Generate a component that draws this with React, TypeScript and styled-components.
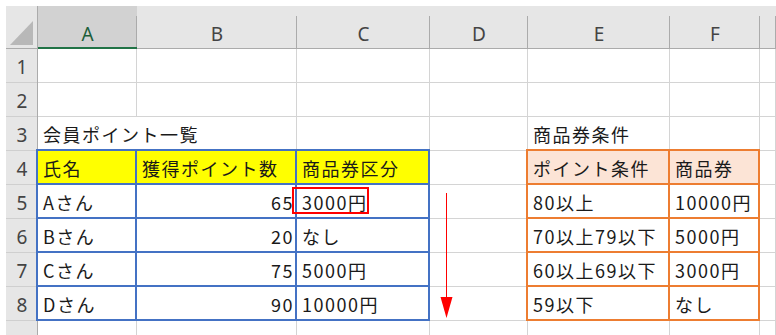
import React from 'react';
import styled, { createGlobalStyle, css } from 'styled-components';

const GlobalStyle = createGlobalStyle`
  html, body { margin: 0; padding: 0; background: #fff; }
  body { font-family: "Noto Sans CJK JP", "Noto Sans", sans-serif; }
`;

const BORDER_COLORS = { blue: '#4472C4', orange: '#ED7D31' } as const;
type BorderKind = keyof typeof BORDER_COLORS;

type CellDef = {
  text?: string;
  align?: 'left' | 'right';
  fill?: string;
  border?: BorderKind;
  span?: number;
  mark?: boolean;
};

const YELLOW = '#FFFF00';
const PEACH = '#FCE4D6';

const COLUMNS = ['A', 'B', 'C', 'D', 'E', 'F', ''];

const E: CellDef = {};

const ROWS: CellDef[][] = [
  [E, E, E, E, E, E, E],
  [E, E, E, E, E, E, E],
  [{ text: '会員ポイント一覧', span: 2 }, E, E, { text: '商品券条件' }, E, E],
  [
    { text: '氏名', fill: YELLOW, border: 'blue' },
    { text: '獲得ポイント数', fill: YELLOW, border: 'blue' },
    { text: '商品券区分', fill: YELLOW, border: 'blue' },
    E,
    { text: 'ポイント条件', fill: PEACH, border: 'orange' },
    { text: '商品券', fill: PEACH, border: 'orange' },
    E,
  ],
  [
    { text: 'Aさん', border: 'blue' },
    { text: '65', align: 'right', border: 'blue' },
    { text: '3000円', border: 'blue', mark: true },
    E,
    { text: '80以上', border: 'orange' },
    { text: '10000円', border: 'orange' },
    E,
  ],
  [
    { text: 'Bさん', border: 'blue' },
    { text: '20', align: 'right', border: 'blue' },
    { text: 'なし', border: 'blue' },
    E,
    { text: '70以上79以下', border: 'orange' },
    { text: '5000円', border: 'orange' },
    E,
  ],
  [
    { text: 'Cさん', border: 'blue' },
    { text: '75', align: 'right', border: 'blue' },
    { text: '5000円', border: 'blue' },
    E,
    { text: '60以上69以下', border: 'orange' },
    { text: '3000円', border: 'orange' },
    E,
  ],
  [
    { text: 'Dさん', border: 'blue' },
    { text: '90', align: 'right', border: 'blue' },
    { text: '10000円', border: 'blue' },
    E,
    { text: '59以下', border: 'orange' },
    { text: 'なし', border: 'orange' },
    E,
  ],
  [E, E, E, E, E, E, E],
];

// Row 9 is only partly on screen; its number lies below the visible edge.
const VISIBLE_ROW_LABELS = 8;

const Sheet = styled.div`
  position: relative;
  width: 776px;
  height: 335px;
  box-sizing: border-box;
  padding: 6px 0 0 6px;
  overflow: hidden;
  background: #fff;
`;

const Grid = styled.div`
  display: grid;
  grid-template-columns: 32px 99px 160px 133px 98px 142px 90px 1fr;
  grid-template-rows: 43px repeat(9, 34px);
`;

const Corner = styled.div`
  background:
    linear-gradient(#ababab, #ababab) right bottom / 1px 100% no-repeat,
    linear-gradient(#ababab, #ababab) left bottom / 100% 1px no-repeat,
    #e6e6e6;
  display: flex;
  align-items: flex-end;
  justify-content: flex-end;
  padding: 0 4px 4px 0;
  box-sizing: border-box;
`;

const ColHeader = styled.div<{ $selected?: boolean }>`
  display: flex;
  align-items: flex-end;
  justify-content: center;
  padding-bottom: 5px;
  box-sizing: border-box;
  font-family: "Noto Sans", "Noto Sans CJK JP", sans-serif;
  font-size: 19px;
  line-height: 1;
  color: #444;
  background:
    linear-gradient(#ababab, #ababab) right bottom / 1px 33px no-repeat,
    linear-gradient(#ababab, #ababab) left bottom / 100% 1px no-repeat,
    #e6e6e6;
  ${(p) =>
    p.$selected &&
    css`
      color: #1d5e3a;
      background:
        linear-gradient(#217346, #217346) left bottom / 100% 2px no-repeat,
        linear-gradient(#ababab, #ababab) right bottom / 1px 33px no-repeat,
        #d2d2d2;
    `}
`;

const RowHeader = styled.div`
  display: flex;
  align-items: center;
  justify-content: center;
  padding-top: 3px;
  box-sizing: border-box;
  font-family: "Noto Sans", "Noto Sans CJK JP", sans-serif;
  font-size: 19px;
  line-height: 1;
  color: #444;
  background:
    linear-gradient(#ababab, #ababab) right top / 1px 100% no-repeat,
    linear-gradient(#cfcfcf, #cfcfcf) left bottom / 100% 1px no-repeat,
    #e6e6e6;
`;

const Cell = styled.div<{ $align?: string; $fill?: string; $border?: BorderKind; $span?: number }>`
  position: relative;
  display: flex;
  align-items: center;
  justify-content: ${(p) => (p.$align === 'right' ? 'flex-end' : 'flex-start')};
  padding: 0 ${(p) => (p.$align === 'right' ? '3px' : '0')} 1px 5px;
  box-sizing: border-box;
  white-space: nowrap;
  font-size: 18px;
  letter-spacing: 1.5px;
  color: #1a1a1a;
  background: ${(p) => p.$fill ?? '#fff'};
  box-shadow: inset -1px -1px 0 #d4d4d4;
  grid-column: span ${(p) => p.$span ?? 1};
  ${(p) =>
    p.$border &&
    css`
      &::after {
        content: '';
        position: absolute;
        top: -2px;
        left: -2px;
        right: 0;
        bottom: 0;
        border: 2px solid ${BORDER_COLORS[p.$border]};
        pointer-events: none;
        z-index: 2;
      }
    `}
`;

const Mark = styled.div`
  position: absolute;
  left: -5px;
  top: 2px;
  width: 77px;
  height: 27px;
  box-sizing: border-box;
  border: 2px solid #ff0000;
  z-index: 3;
  pointer-events: none;
`;

const Arrow = styled.svg`
  position: absolute;
  left: 440px;
  top: 190px;
  z-index: 4;
`;

export default function App() {
  return (
    <>
      <GlobalStyle />
      <Sheet>
        <Grid>
          <Corner>
            <svg width="24" height="24" viewBox="0 0 24 24">
              <polygon points="23,0 0,24 23,24" fill="#b8b8b8" />
            </svg>
          </Corner>
          {COLUMNS.map((c, i) => (
            <ColHeader key={i} $selected={c === 'A'}>
              {c}
            </ColHeader>
          ))}
          {ROWS.map((row, r) => {
            const cells: React.ReactNode[] = [];
            let col = 0;
            row.forEach((cell, i) => {
              if (col >= 7) return;
              cells.push(
                <Cell
                  key={`${r}-${i}`}
                  $align={cell.align}
                  $fill={cell.fill}
                  $border={cell.border}
                  $span={cell.span}
                >
                  {cell.text}
                  {cell.mark && <Mark />}
                </Cell>
              );
              col += cell.span ?? 1;
            });
            return (
              <React.Fragment key={r}>
                <RowHeader>{r < VISIBLE_ROW_LABELS ? r + 1 : ''}</RowHeader>
                {cells}
              </React.Fragment>
            );
          })}
        </Grid>
        <Arrow width="14" height="132" viewBox="0 0 14 132">
          <line x1="6.5" y1="3" x2="6.5" y2="108" stroke="#ff0000" strokeWidth="1" />
          <polygon points="0.5,107 12.5,107 6.5,128" fill="#ff0000" />
        </Arrow>
      </Sheet>
    </>
  );
}
